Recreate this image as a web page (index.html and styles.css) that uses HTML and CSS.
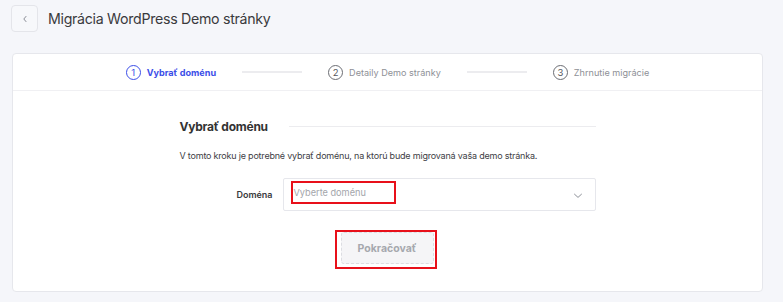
FILE: index.html
```html
<!DOCTYPE html>
<html lang="sk">
<head>
<meta charset="utf-8">
<link rel="stylesheet" href="styles.css">
</head>
<body>
<header class="page-head">
  <button class="back-btn" aria-label="Späť">
    <svg width="10" height="10" viewBox="0 0 10 10"><path d="M6 2.4 3.8 5 6 7.6" fill="none" stroke="#8a8d96" stroke-width="1" stroke-linecap="round" stroke-linejoin="round"/></svg>
  </button>
  <h1 class="page-title">Migrácia WordPress Demo stránky</h1>
</header>
<main class="card">
  <nav class="steps">
    <div class="step active"><span class="step-num">1</span><span class="step-label">Vybrať doménu</span></div>
    <span class="step-line"></span>
    <div class="step"><span class="step-num">2</span><span class="step-label">Detaily Demo stránky</span></div>
    <span class="step-line"></span>
    <div class="step"><span class="step-num">3</span><span class="step-label">Zhrnutie migrácie</span></div>
  </nav>
  <section class="content">
    <div class="section-head">
      <h2 class="section-title">Vybrať doménu</h2>
      <span class="section-rule"></span>
    </div>
    <p class="desc">V tomto kroku je potrebné vybrať doménu, na ktorú bude migrovaná vaša demo stránka.</p>
    <div class="form-row">
      <label class="form-label">Doména</label>
      <div class="select">
        <span class="placeholder">Vyberte doménu</span>
        <svg class="chev" width="10" height="6" viewBox="0 0 10 6"><path d="M1.5 1.2 5 4.4l3.5-3.2" fill="none" stroke="#8d9098" stroke-width="1" stroke-linecap="round" stroke-linejoin="round"/></svg>
      </div>
    </div>
    <div class="actions">
      <span class="highlight"><button class="btn-continue" disabled>Pokračovať</button></span>
    </div>
  </section>
</main>
</body>
</html>
```
FILE: styles.css
```css
* { box-sizing: border-box; }
html, body { margin: 0; padding: 0; }
body {
  background: #f5f6fa;
  font-family: Inter, "Noto Sans", sans-serif;
  color: #333;
  width: 783px;
  height: 302px;
  overflow: hidden;
}
.page-head {
  display: flex;
  align-items: flex-start;
  gap: 10px;
  padding: 5px 0 0 11px;
  height: 53px;
}
.back-btn {
  width: 27px;
  height: 27px;
  border: 1px solid #e4e5ea;
  border-radius: 4px;
  background: #f7f8fb;
  display: flex;
  align-items: center;
  justify-content: center;
  padding: 0;
}
.page-title {
  margin: 0;
  font-size: 14.2px;
  letter-spacing: -0.3px;
  font-weight: 400;
  color: #3a3a3d;
  line-height: 27px;
}
.card {
  margin-left: 12px;
  width: 751px;
  height: 239px;
  background: #fff;
  border: 1px solid #e6e7ec;
  border-radius: 4px;
}
.steps {
  height: 37px;
  border-bottom: 1px solid #f0f0f3;
  display: flex;
  align-items: center;
  justify-content: center;
  gap: 26px;
}
.step {
  display: flex;
  align-items: center;
  gap: 6px;
  font-size: 9.1px;
  color: #8e9096;
}
.step-num {
  width: 15px;
  height: 15px;
  border-radius: 50%;
  border: 1.2px solid #6b6d73;
  display: flex;
  align-items: center;
  justify-content: center;
  font-size: 9.5px;
  color: #55575d;
}
.step.active { color: #3b4ee8; font-weight: 700; }
.step.active .step-num { border-color: #3b4ee8; color: #3b4ee8; font-weight: 400; }
.step-line {
  width: 60px;
  height: 2px;
  background: #ececef;
}
.content {
  width: 416px;
  margin: 0 auto;
  padding-top: 27px;
}
.section-head {
  display: flex;
  align-items: center;
  gap: 21px;
  height: 16px;
}
.section-title {
  margin: 0;
  font-size: 12px;
  letter-spacing: -0.25px;
  font-weight: 700;
  color: #333;
  white-space: nowrap;
}
.section-rule {
  flex: 1;
  height: 1px;
  background: #ececef;
}
.desc {
  margin: 15px 0 0;
  font-size: 9px;
  letter-spacing: -0.2px;
  color: #404045;
  line-height: 14px;
}
.form-row {
  display: flex;
  align-items: center;
  margin-top: 15px;
  gap: 10px;
}
.form-label {
  width: 93px;
  text-align: right;
  font-size: 9px;
  font-weight: 600;
  color: #3a3a3d;
}
.select {
  flex: 1;
  height: 33px;
  border: 1px solid #e6e7ec;
  border-radius: 2px;
  display: flex;
  align-items: flex-start;
  justify-content: space-between;
  padding: 2px 12px 0 7px;
}
.placeholder {
  width: 105px;
  height: 23px;
  border: 2px solid #e8101a;
  font-size: 9.2px;
  color: #a3a5ab;
  padding-left: 1px;
  line-height: 19px;
}
.chev { align-self: center; }
.actions {
  display: flex;
  justify-content: center;
  margin-top: 19px;
}
.highlight {
  border: 2px solid #e8101a;
  padding: 0 1px 3px 4px;
  display: inline-flex;
  margin-left: -4px;
}
.btn-continue {
  width: 93px;
  height: 32px;
  background: #f5f5f7;
  border: 1px dashed #dcdde2;
  border-radius: 3px;
  font-family: inherit;
  font-size: 10.5px;
  font-weight: 700;
  color: #a6a8ae;
  padding: 0;
}
```
